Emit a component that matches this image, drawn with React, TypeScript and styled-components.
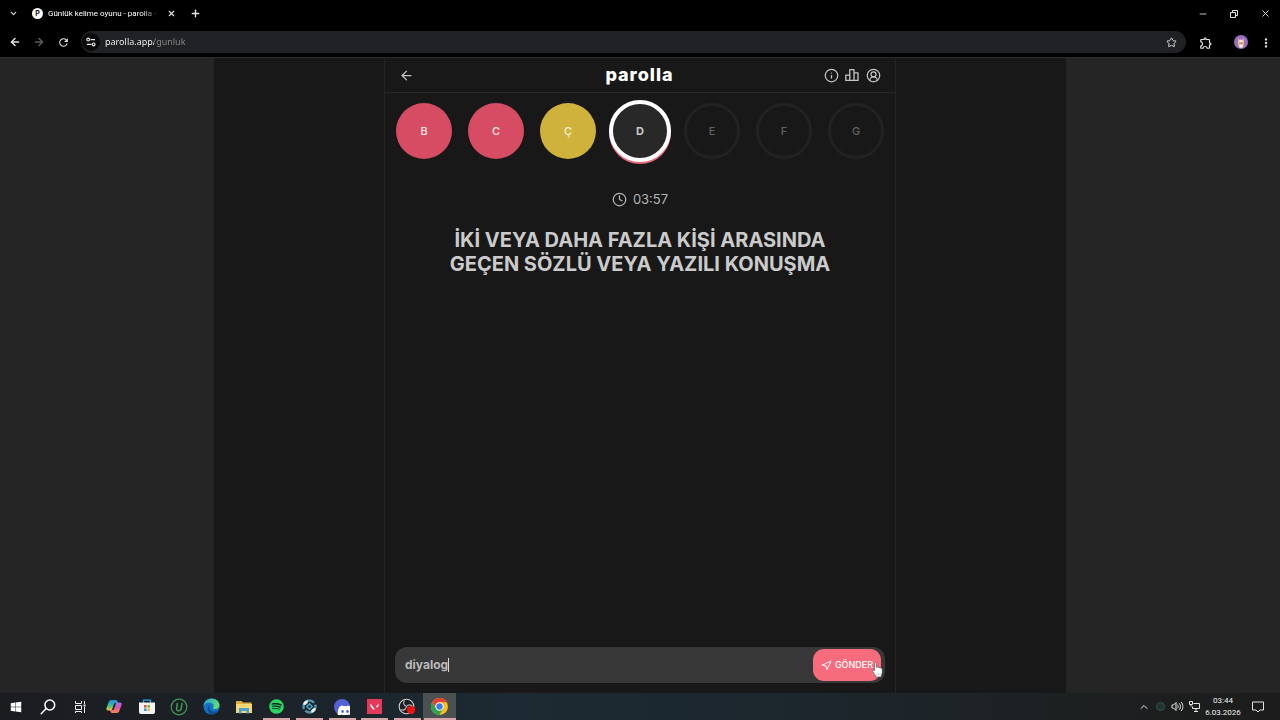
import React, { useState } from "react";
import styled, { createGlobalStyle, css } from "styled-components";
import {
  ArrowLeft,
  ArrowRight,
  ChevronDown,
  ChevronUp,
  CircleUserRound,
  Clock,
  Info,
  Minus,
  Navigation,
  Plus,
  Star,
  X,
} from "lucide-react";
import { FaDiscord, FaSpotify, FaWindows } from "react-icons/fa";
import { MdOutlineExtension, MdMoreVert, MdRefresh } from "react-icons/md";

const GlobalStyle = createGlobalStyle`
  *, *::before, *::after { box-sizing: border-box; }
  body { margin: 0; background: #000; font-family: "Noto Sans", "Open Sans", sans-serif; }
  button, input { font: inherit; color: inherit; margin: 0; padding: 0; border: 0; background: none; }
  button { cursor: pointer; }
  svg { display: block; flex: none; }
`;

const Desktop = styled.div`
  display: flex;
  flex-direction: column;
  min-height: 100vh;
  color: #e6e6e6;
`;

/* ---------- browser window ---------- */

const TabStrip = styled.header`
  display: flex;
  align-items: center;
  justify-content: space-between;
  height: 27px;
  padding: 0 9px 0 7px;
  background: #000;
`;

const TabGroup = styled.div`
  display: flex;
  align-items: center;
`;

const Tab = styled.div`
  display: flex;
  align-items: center;
  gap: 5px;
  margin: 0 12px 0 13px;
`;

const Favicon = styled.span`
  display: grid;
  place-items: center;
  width: 11px;
  height: 11px;
  border-radius: 50%;
  background: #fff;
  color: #111;
  font: 700 7px/11px Inter, sans-serif;
`;

const TabTitle = styled.span`
  min-width: 112px;
  white-space: nowrap;
  font: 8px/14px Roboto, sans-serif;
  color: #fff;
  mask-image: linear-gradient(90deg, #000 84%, transparent);
`;

const GlyphButton = styled.button<{ $dim?: boolean }>`
  display: grid;
  place-items: center;
  width: 12px;
  height: 12px;
  color: ${(p) => (p.$dim ? "#5c5c5c" : "#e4e4e4")};
`;

const WindowControls = styled.div`
  display: flex;
  gap: 19px;
`;

const Toolbar = styled.nav`
  display: flex;
  align-items: center;
  gap: 12px;
  height: 31px;
  padding: 0 9px;
  border-bottom: 1px solid #2e2e2e;
  background: #000;
`;

const AddressBar = styled.div`
  display: flex;
  flex: 1;
  align-items: center;
  gap: 5px;
  height: 22px;
  margin: 0 1px 0 0;
  padding: 0 9px 0 1px;
  border-radius: 11px;
  background: #202124;
`;

const SiteButton = styled.button`
  display: grid;
  place-items: center;
  width: 18px;
  height: 18px;
  border-radius: 50%;
  background: #0a0a0a;
`;

const AddressInput = styled.input`
  flex: 1;
  min-width: 0;
  outline: none;
  font-size: 9px;
  line-height: 14px;
  color: #ececec;
  background: linear-gradient(90deg, #fff 49px, #8c8c8c 49px);
  background-clip: text;
  -webkit-text-fill-color: transparent;
`;

const Avatar = styled.button`
  display: grid;
  place-items: center;
  width: 14px;
  height: 14px;
  margin: 0 -1px 0 11px;
  border-radius: 50%;
  overflow: hidden;
  background: #9a6cc0;
`;

/* ---------- game page ---------- */

const Page = styled.main`
  display: flex;
  flex: 1;
  justify-content: center;
  background: #252525;
  font-family: Inter, Roboto, sans-serif;
`;

const Backdrop = styled.div`
  display: flex;
  justify-content: center;
  width: 66.6%;
  background: #181818;
`;

const Game = styled.section`
  display: flex;
  flex-direction: column;
  width: 60%;
  min-width: 512px;
  border: solid #242424;
  border-width: 0 1px;
`;

const GameHeader = styled.header`
  display: grid;
  grid-template-columns: 1fr auto 1fr;
  align-items: center;
  height: 35px;
  padding: 0 14px 0 13px;
  border-bottom: 1px solid #292929;
  color: #c4c4c4;
`;

const Brand = styled.h1`
  margin: 0;
  font-size: 18px;
  line-height: 20px;
  font-weight: 800;
  letter-spacing: 1px;
  color: #fff;
`;

const HeaderActions = styled.div`
  display: flex;
  justify-content: flex-end;
  gap: 5px;
`;

const HeaderButton = styled.button`
  display: grid;
  place-items: center;
  width: 16px;
  height: 16px;
`;

const Letters = styled.div`
  display: flex;
  justify-content: center;
  gap: 16px;
  padding: 10px 0;
`;

type LetterState = "wrong" | "passed" | "current" | "idle";

const letterLook = {
  wrong: css`
    background: #d64d63;
    color: #f6e4e6;
  `,
  passed: css`
    background: #ceb23c;
    color: #f8f2dc;
  `,
  current: css`
    width: 62px;
    height: 62px;
    margin: -3px;
    border: 4px solid #fff;
    background: #282828;
    color: #c9c9c9;
    font-weight: 700;
    box-shadow: 0 2px 0 #e8657a;
  `,
  idle: css`
    border: 3px solid #222;
    color: #626262;
  `,
};

const Letter = styled.button<{ $state: LetterState }>`
  width: 56px;
  height: 56px;
  border-radius: 50%;
  font-size: 11px;
  line-height: 14px;
  font-weight: 500;
  ${(p) => letterLook[p.$state]}
`;

const Timer = styled.div`
  display: flex;
  align-items: center;
  justify-content: center;
  gap: 6px;
  margin-top: 20px;
  font-size: 13px;
  line-height: 20px;
  color: #b4b4b4;
`;

const Question = styled.h2`
  max-width: 420px;
  margin: 19px auto 0;
  text-align: center;
  font-size: 20px;
  line-height: 24px;
  font-weight: 700;
  color: #cbcbcb;
`;

const AnswerForm = styled.form`
  display: flex;
  align-items: center;
  height: 36px;
  margin: auto 10px 10px;
  padding: 0 4px 0 10px;
  border-radius: 12px;
  background: #383838;
`;

const AnswerInput = styled.input`
  field-sizing: content;
  outline: none;
  font-size: 12px;
  line-height: 16px;
  font-weight: 700;
  color: #b9b9b9;
`;

const Caret = styled.span`
  width: 1px;
  height: 14px;
  background: #d8d8d8;
`;

const SendButton = styled.button`
  position: relative;
  display: flex;
  align-items: center;
  justify-content: center;
  gap: 3px;
  width: 68px;
  height: 32px;
  margin-left: auto;
  border-radius: 11px;
  background: #f76c7c;
  color: #fff;
  font-size: 9px;
  line-height: 12px;
  font-weight: 500;
`;

const Pointer = styled.svg`
  position: absolute;
  right: -2px;
  bottom: 3px;
`;

/* ---------- taskbar ---------- */

const Taskbar = styled.footer`
  display: flex;
  align-items: stretch;
  height: 27px;
  background: linear-gradient(90deg, #1b1c20 0%, #1c2228 20%, #1c2a33 40%, #1c272e 60%, #1d2021 85%, #1c1c1c 100%);
`;

const SystemButtons = styled.div`
  display: grid;
  grid-template-columns: repeat(3, 32px);
  margin-right: 2px;
`;

const Apps = styled.div`
  display: grid;
  grid-template-columns: repeat(11, 1fr);
  width: 358px;
`;

const TaskButton = styled.button<{ $open?: boolean; $active?: boolean }>`
  display: grid;
  place-items: center;
  background: ${(p) => (p.$active ? "#4b5053" : "none")};
  ${(p) =>
    p.$open &&
    css`
      &::after {
        content: "";
        grid-area: 1 / 1;
        align-self: end;
        width: ${p.$active ? "32px" : "27px"};
        height: 2px;
        background: #d9a5a8;
      }
    `}
  & > svg {
    grid-area: 1 / 1;
  }
`;

const Tray = styled.div`
  display: flex;
  align-items: center;
  gap: 5px;
  margin-left: auto;
  padding-right: 16px;
`;

const DateTime = styled.time`
  display: block;
  width: 36px;
  margin-right: 6px;
  text-align: center;
  font: 8px/12px Roboto, sans-serif;
  color: #f0f0f0;
`;

/* ---------- drawings ---------- */

const RestoreIcon = () => (
  <svg width="8" height="8" viewBox="0 0 8 8" fill="none" stroke="currentColor" strokeWidth="1">
    <path d="M.5 2.5h5v5h-5zM2.5 2.5v-2h5v5h-2" />
  </svg>
);

const TuneIcon = () => (
  <svg width="10" height="10" viewBox="0 0 10 10" fill="none" stroke="currentColor" strokeWidth="1.2">
    <circle cx="2.2" cy="2.6" r="1.4" />
    <path d="M4.6 2.6H9M1 7.4h4.4" />
    <circle cx="7.6" cy="7.4" r="1.4" />
  </svg>
);

const PodiumIcon = () => (
  <svg width="14" height="14" viewBox="0 0 14 14" fill="none" stroke="currentColor" strokeWidth="1.3" strokeLinejoin="round">
    <path d="M.8 12.400V7.200h4v5.200zM4.800 12.400V1.600h4.200v10.800zM9 12.400V4.800h4v7.600z" />
  </svg>
);

const AvatarArt = () => (
  <svg width="14" height="14" viewBox="0 0 14 14">
    <path d="M4.500 2.500l1 2.500h3l1-2.500.5 5.500-1 4.500H5L4 8z" fill="#ecc98b" />
    <path d="M5.500 5.500l1.500-1.300 1.500 1.300v2h-3z" fill="#fbeadd" />
    <circle cx="6" cy="8" r=".7" fill="#6d4573" />
    <circle cx="8" cy="8" r=".7" fill="#6d4573" />
    <path d="M5.700 10h2.600v2.500H5.700z" fill="#f7f0f7" />
  </svg>
);

const SearchIcon = () => (
  <svg width="16" height="16" viewBox="0 0 16 16" fill="none" stroke="#fff" strokeWidth="1.500" strokeLinecap="round">
    <circle cx="9.800" cy="6" r="4.900" />
    <path d="M6.200 9.600L1.200 14.800" />
  </svg>
);

const TaskViewIcon = () => (
  <svg width="13" height="12" viewBox="0 0 13 12" fill="none" stroke="#eee" strokeWidth="1">
    <path d="M1.500 0v2.500h6V0M1.500 4.500h6v4h-6zM1.500 12v-1.500h6V12M10.500 0v3M10.500 6v6" />
    <path d="M9.500 3.500h2v2h-2z" fill="#eee" stroke="none" />
  </svg>
);

const CopilotIcon = () => (
  <svg width="16" height="15" viewBox="0 0 16 15">
    <defs>
      <linearGradient id="copL" x1="0" y1="0" x2="0" y2="1">
        <stop offset="0" stopColor="#1f8fe8" />
        <stop offset=".55" stopColor="#3fc08a" />
        <stop offset="1" stopColor="#f5c32c" />
      </linearGradient>
      <linearGradient id="copR" x1="0" y1="0" x2="0" y2="1">
        <stop offset="0" stopColor="#a06cf0" />
        <stop offset=".55" stopColor="#e855a0" />
        <stop offset="1" stopColor="#ff8a4a" />
      </linearGradient>
    </defs>
    <path d="M5.500 1h4.200c1 0 1.500.7 1.800 1.500l.5 1.500H9.600c-1 0-1.500.5-1.800 1.500L6.300 10c-.3 1-1 1.500-2 1.500H2C.6 11.500.1 10.300.5 9L2.700 3C3.200 1.700 4 1 5.500 1z" fill="url(#copL)" />
    <path d="M10.500 14H6.300c-1 0-1.500-.7-1.800-1.500L4 11h2.400c1 0 1.500-.5 1.800-1.500L9.700 5c.3-1 1-1.500 2-1.500H14c1.400 0 1.900 1.200 1.500 2.500L13.300 12c-.5 1.300-1.300 2-2.800 2z" fill="url(#copR)" />
  </svg>
);

const StoreIcon = () => (
  <svg width="16" height="16" viewBox="0 0 16 16">
    <path d="M4.500 4V1.200h7V4" fill="none" stroke="#2fa3e6" strokeWidth="1.300" />
    <path d="M0 3.500h16V13a2 2 0 0 1-2 2H2a2 2 0 0 1-2-2z" fill="#f2f2f2" />
    <path d="M5 6h2.600v2.600H5z" fill="#e5533d" />
    <path d="M8.400 6H11v2.600H8.400z" fill="#76b83f" />
    <path d="M5 9.400h2.600V12H5z" fill="#2f9be0" />
    <path d="M8.400 9.400H11V12H8.400z" fill="#f3b82c" />
  </svg>
);

const UninstallerIcon = () => (
  <svg width="18" height="18" viewBox="0 0 18 18" fill="none" stroke="#3f9a58">
    <circle cx="9" cy="9" r="7.800" strokeWidth="1.200" />
    <path d="M7.500 5L6.600 10c-.3 1.800.4 2.800 1.900 2.800s2.400-.9 2.700-2.500L12 5" strokeWidth="1.500" />
  </svg>
);

const EdgeIcon = () => (
  <svg width="17" height="17" viewBox="0 0 17 17">
    <defs>
      <linearGradient id="edgeTop" x1="0" y1="0" x2="1" y2=".3">
        <stop offset="0" stopColor="#249fe0" />
        <stop offset="1" stopColor="#5ddc78" />
      </linearGradient>
    </defs>
    <circle cx="8.500" cy="8.500" r="8" fill="#1672c4" />
    <path d="M.5 8.200C.8 3.700 4.200.5 8.500.5c4.800 0 8 3.300 8 6.600 0 2.500-1.800 4-4 4-1.500 0-2.600-.5-2.600-1.200 0-.6.800-.9.800-2.100C10.700 6 8.900 4.800 6.500 4.800 3.500 4.800 1.200 6.500.5 8.200z" fill="url(#edgeTop)" />
    <path d="M6.500 7c-1 3.500 1.500 7 5.500 6.500 1.500-.1 2.600-.7 3.400-1.200-1.200 2.500-3.600 4.200-6.900 4.200C4 15.500 3.500 9 6.500 7z" fill="#0e4f96" />
  </svg>
);

const FolderIcon = () => (
  <svg width="16" height="14" viewBox="0 0 16 14">
    <path d="M0 1h5.500L7 2.500h8.500V13H0z" fill="#e0ac3c" />
    <path d="M0 4h16v9H0z" fill="#f8d775" />
    <path d="M3 8h10v5.500h-2.500V11h-5v2.500H3z" fill="#4aa3cf" />
  </svg>
);

const AtomIcon = () => (
  <svg width="17" height="17" viewBox="0 0 17 17" fill="none">
    <circle cx="8.500" cy="8.500" r="6" stroke="#4f93ae" strokeWidth="2.400" strokeDasharray="7.400 2.020" strokeDashoffset="3" />
    <path d="M8.500 4.800l3.700 3.700-3.700 3.700-3.700-3.700z" fill="#4aa6cb" />
    <circle cx="8.500" cy="8.500" r="1.300" fill="#15242e" />
    <path d="M2 6.500C2.500 4 4 2.500 6.500 2l.5 2.500L4.500 7z" fill="#e6f1f5" />
    <path d="M15 10.500c-.5 2.500-2 4-4.500 4.500l-.5-2.500 2.500-2.500z" fill="#e6f1f5" />
  </svg>
);

const DiscordIcon = () => (
  <svg width="16" height="16" viewBox="0 0 16 16">
    <circle cx="8" cy="8" r="8" fill="#5462d8" />
    <FaDiscord x="3" y="4" width="10" height="8" color="#fff" />
  </svg>
);

const ValorantIcon = () => (
  <svg width="15" height="15" viewBox="0 0 15 15">
    <path d="M0 0h15v15H0z" fill="#e23a58" />
    <path d="M3.500 4.500l4.500 6H6L3.500 7.300zM11.500 4.500L8.600 8.300h1.900l1-1.300z" fill="#fff" />
  </svg>
);

const ObsIcon = () => (
  <svg width="18" height="17" viewBox="0 0 18 17" fill="none">
    <circle cx="8.500" cy="8.500" r="7.300" fill="#1b1d20" stroke="#cfcfcf" strokeWidth="1.100" />
    <path d="M8.500 8.500C5.500 7.500 5 4.500 6.500 2.500M8.500 8.500c2-2.500 5-1.800 6 .3M8.500 8.500c-.5 3-3.200 4.300-5.500 3.200" stroke="#b9b9b9" strokeWidth="1.200" />
    <circle cx="13" cy="12" r="4" fill="#ee1414" />
  </svg>
);

const ChromeIcon = () => (
  <svg width="17" height="17" viewBox="0 0 16 16">
    <circle cx="8" cy="8" r="8" fill="#fbc116" />
    <path d="M8 4.100h6.930A8 8 0 0 0 1.070 4L4.620 9.950A3.900 3.900 0 0 1 8 4.100z" fill="#e34133" />
    <path d="M4.620 9.950L1.070 4A8 8 0 0 0 8 16l3.380-6.050z" fill="#2ea24f" />
    <circle cx="8" cy="8" r="3.900" fill="#fff" />
    <circle cx="8" cy="8" r="3" fill="#3b7ded" />
  </svg>
);

const HandPointer = () => (
  <Pointer width="11" height="16" viewBox="0 0 11 16" aria-hidden="true">
    <path
      d="M2.500 1.500C2.500.3 4.500.3 4.500 1.500V5.500c.4-.6 1.700-.5 1.900.2.500-.4 1.600-.2 1.800.5.600-.4 2 0 2 1.100v3.400c0 1.200-.7 2-1 2.800V15H3.600v-1.500C2.500 12.300 1.500 10.800.6 9.300.1 8.200 1.200 7.500 2 8.300l.5.600z"
      fill="#fff"
      stroke="#333"
      strokeWidth=".5"
    />
    <path d="M5 11v2M6.500 11v2M8 11v2" stroke="#999" strokeWidth=".4" />
  </Pointer>
);

const StatusIcon = () => (
  <svg width="11" height="11" viewBox="0 0 11 11">
    <circle cx="5.500" cy="5.500" r="4" fill="#1f3330" stroke="#35504a" />
  </svg>
);

const SpeakerIcon = () => (
  <svg width="13" height="11" viewBox="0 0 13 11" fill="none" stroke="#e4e4e4" strokeWidth="1">
    <path d="M1 4h1.500L5 1.500v8L2.500 7H1zM6.500 3.700c.8 1 .8 2.600 0 3.600M8.300 2.300c1.500 1.800 1.500 4.600 0 6.400M10.200 1c2.200 2.600 2.200 6.400 0 9" />
  </svg>
);

const NetworkIcon = () => (
  <svg width="11" height="11" viewBox="0 0 11 11" fill="none" stroke="#e4e4e4" strokeWidth="1">
    <path d="M4.500 2.500h6v5h-7v-2M5 10.500h4M7 7.500v3M.5.500h3v3h-3zM2 3.500v2" />
  </svg>
);

const NotificationIcon = () => (
  <svg width="12" height="12" viewBox="0 0 12 12" fill="none" stroke="#e4e4e4" strokeWidth="1">
    <path d="M.5 1h11v8H8l-2 2-2-2H.5z" />
  </svg>
);

const letters: { letter: string; state: LetterState }[] = [
  { letter: "B", state: "wrong" },
  { letter: "C", state: "wrong" },
  { letter: "Ç", state: "passed" },
  { letter: "D", state: "current" },
  { letter: "E", state: "idle" },
  { letter: "F", state: "idle" },
  { letter: "G", state: "idle" },
];

const apps = [
  { name: "Copilot", icon: <CopilotIcon /> },
  { name: "Store", icon: <StoreIcon /> },
  { name: "Uninstaller", icon: <UninstallerIcon /> },
  { name: "Edge", icon: <EdgeIcon /> },
  { name: "Explorer", icon: <FolderIcon /> },
  { name: "Spotify", icon: <FaSpotify size={15} color="#2bd562" />, open: true },
  { name: "Launcher", icon: <AtomIcon />, open: true },
  { name: "Discord", icon: <DiscordIcon />, open: true },
  { name: "Valorant", icon: <ValorantIcon />, open: true },
  { name: "OBS", icon: <ObsIcon />, open: true },
  { name: "Chrome", icon: <ChromeIcon />, open: true, active: true },
];

export default function App() {
  const [answer, setAnswer] = useState("diyalog");
  const [url, setUrl] = useState("parolla.app/gunluk");

  return (
    <Desktop>
      <GlobalStyle />
      <TabStrip>
        <TabGroup>
          <GlyphButton aria-label="Search tabs"><ChevronDown size={9} strokeWidth={3} /></GlyphButton>
          <Tab>
            <Favicon>P</Favicon>
            <TabTitle>Günlük kelime oyunu - parolla -</TabTitle>
            <GlyphButton aria-label="Close tab"><X size={9} strokeWidth={3} /></GlyphButton>
          </Tab>
          <GlyphButton aria-label="New tab"><Plus size={11} strokeWidth={3} /></GlyphButton>
        </TabGroup>
        <WindowControls>
          <GlyphButton aria-label="Minimize"><Minus size={10} /></GlyphButton>
          <GlyphButton aria-label="Restore"><RestoreIcon /></GlyphButton>
          <GlyphButton aria-label="Close window"><X size={11} /></GlyphButton>
        </WindowControls>
      </TabStrip>
      <Toolbar>
        <GlyphButton aria-label="Back"><ArrowLeft size={12} strokeWidth={3} /></GlyphButton>
        <GlyphButton aria-label="Forward" $dim><ArrowRight size={12} strokeWidth={3} /></GlyphButton>
        <GlyphButton aria-label="Reload"><MdRefresh size={13} /></GlyphButton>
        <AddressBar>
          <SiteButton aria-label="Site information"><TuneIcon /></SiteButton>
          <AddressInput aria-label="Address" value={url} onChange={(e) => setUrl(e.target.value)} />
          <GlyphButton aria-label="Bookmark"><Star size={11} /></GlyphButton>
        </AddressBar>
        <GlyphButton aria-label="Extensions"><MdOutlineExtension size={14} /></GlyphButton>
        <Avatar aria-label="Profile"><AvatarArt /></Avatar>
        <GlyphButton aria-label="Menu"><MdMoreVert size={14} /></GlyphButton>
      </Toolbar>

      <Page>
        <Backdrop>
          <Game>
            <GameHeader>
              <HeaderButton aria-label="Geri"><ArrowLeft size={15} strokeWidth={2} /></HeaderButton>
              <Brand>parolla</Brand>
              <HeaderActions>
                <HeaderButton aria-label="Bilgi"><Info size={15} strokeWidth={2} /></HeaderButton>
                <HeaderButton aria-label="İstatistik"><PodiumIcon /></HeaderButton>
                <HeaderButton aria-label="Profil"><CircleUserRound size={15} strokeWidth={2} /></HeaderButton>
              </HeaderActions>
            </GameHeader>
            <Letters>
              {letters.map((l) => (
                <Letter key={l.letter} $state={l.state}>{l.letter}</Letter>
              ))}
            </Letters>
            <Timer>
              <Clock size={15} strokeWidth={2} />
              <span>03:57</span>
            </Timer>
            <Question>İKİ VEYA DAHA FAZLA KİŞİ ARASINDA GEÇEN SÖZLÜ VEYA YAZILI KONUŞMA</Question>
            <AnswerForm onSubmit={(e) => e.preventDefault()}>
              <AnswerInput aria-label="Cevap" value={answer} onChange={(e) => setAnswer(e.target.value)} />
              <Caret />
              <SendButton type="submit">
                <Navigation size={11} strokeWidth={2} />
                GÖNDER
                <HandPointer />
              </SendButton>
            </AnswerForm>
          </Game>
        </Backdrop>
      </Page>

      <Taskbar>
        <SystemButtons>
          <TaskButton aria-label="Start"><FaWindows size={12} color="#fff" /></TaskButton>
          <TaskButton aria-label="Search"><SearchIcon /></TaskButton>
          <TaskButton aria-label="Task view"><TaskViewIcon /></TaskButton>
        </SystemButtons>
        <Apps>
          {apps.map((a) => (
            <TaskButton key={a.name} aria-label={a.name} $open={a.open} $active={a.active}>{a.icon}</TaskButton>
          ))}
        </Apps>
        <Tray>
          <ChevronUp size={12} />
          <StatusIcon />
          <SpeakerIcon />
          <NetworkIcon />
          <DateTime>03:44<br />6.03.2026</DateTime>
          <NotificationIcon />
        </Tray>
      </Taskbar>
    </Desktop>
  );
}
